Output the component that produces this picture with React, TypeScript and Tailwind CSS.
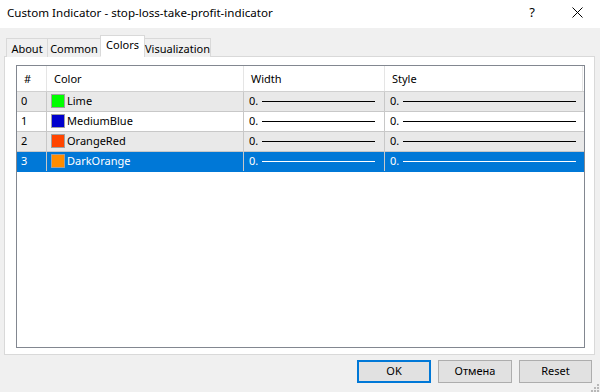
import clsx from 'clsx'

type Buffer = { index: number; name: string; color: string }

const buffers: Buffer[] = [
  { index: 0, name: 'Lime', color: '#00ff00' },
  { index: 1, name: 'MediumBlue', color: '#0000cd' },
  { index: 2, name: 'OrangeRed', color: '#ff4500' },
  { index: 3, name: 'DarkOrange', color: '#ff8c00' },
]

const tabs = [
  { label: 'About', width: 'w-[42px]' },
  { label: 'Common', width: 'w-[54px]' },
  { label: 'Colors', width: 'w-[45px]' },
  { label: 'Visualization', width: 'w-[67px]' },
]

function LineSample({ selected, className }: { selected: boolean; className: string }) {
  return <div className={clsx('h-px', selected ? 'bg-white' : 'bg-black', className)} />
}

export default function App() {
  const selectedRow = 3
  const activeTab = 'Colors'

  return (
    <div className="flex h-[392px] w-[600px] flex-col overflow-hidden bg-[#f0f0f0] font-['Segoe_UI','Noto_Sans',sans-serif] text-[11px] text-black">
      <div className="flex h-[28px] items-center bg-white pl-[7px]">
        <span className="flex-1 pb-[2px] text-[11.6px]">Custom Indicator - stop-loss-take-profit-indicator</span>
        <span className="w-[20px] pb-[2px] text-center text-[13px]">?</span>
        <svg className="ml-[30px] mr-[17px] mb-[2px]" width="11" height="11" viewBox="0 0 11 11">
          <path d="M0.5 0.5L10.5 10.5M10.5 0.5L0.5 10.5" stroke="#000" strokeWidth="1" />
        </svg>
      </div>

      <div className="relative z-10 mt-[7px] flex h-[22px] items-end pl-[6px] -mb-px">
        {tabs.map((tab) => {
          const active = tab.label === activeTab
          return (
            <div
              key={tab.label}
              className={clsx(
                '-ml-px flex items-start justify-center border border-[#d9d9d9] first:ml-0',
                tab.width,
                active
                  ? 'h-[22px] border-b-white bg-white pt-[1px]'
                  : 'h-[19px] border-b-0 bg-[#f0f0f0] pt-[2px]',
              )}
            >
              {tab.label}
            </div>
          )
        })}
      </div>

      <div className="ml-[4px] h-[303px] w-[591px] border border-[#d9d9d9] bg-white pl-[11px] pt-[8px]">
        <div className="h-[283px] w-[569px] border border-[#828790] bg-white">
          <div className="grid h-[26px] grid-cols-[30px_197px_141px_198px] border-b border-[#d0d0d0]">
            <div className="border-r border-[#e5e5e5] pl-[7px] pt-[5px]">#</div>
            <div className="border-r border-[#e5e5e5] pl-[7px] pt-[5px]">Color</div>
            <div className="border-r border-[#e5e5e5] pl-[7px] pt-[5px]">Width</div>
            <div className="border-r border-[#e5e5e5] pl-[7px] pt-[5px]">Style</div>
          </div>
          {buffers.map((b) => {
            const selected = b.index === selectedRow
            return (
              <div
                key={b.index}
                className={clsx(
                  'grid h-[20px] grid-cols-[30px_197px_141px_199px] border-b',
                  selected
                    ? 'border-[#0078d7] bg-[#0078d7] text-white'
                    : b.index % 2 === 0
                      ? 'border-[#c8c8c8] bg-[#e9e9e9]'
                      : 'border-[#c8c8c8] bg-white',
                )}
              >
                <div className="flex items-center border-r border-[#c8c8c8] pl-[4px]">{b.index}</div>
                <div className="flex items-center border-r border-[#c8c8c8] pl-[4px]">
                  <span
                    className="mr-[2px] h-[14px] w-[14px] border border-[#a0a0a0]"
                    style={{ backgroundColor: b.color }}
                  />
                  {b.name}
                </div>
                <div className="flex items-center border-r border-[#c8c8c8] pl-[5px]">
                  <span className="w-[13px]">0.</span>
                  <LineSample selected={selected} className="w-[113px]" />
                </div>
                <div className="flex items-center pl-[5px]">
                  <span className="w-[13px]">0.</span>
                  <LineSample selected={selected} className="w-[173px]" />
                </div>
              </div>
            )
          })}
        </div>
      </div>

      <div className="mt-[5px] flex items-start justify-end gap-[7px] pr-[8px]">
        <button className="h-[23px] w-[74px] border-2 border-[#0078d7] bg-[#e1e1e1]">OK</button>
        <button className="h-[23px] w-[74px] border border-[#adadad] bg-[#e1e1e1]">Отмена</button>
        <button className="h-[23px] w-[73px] border border-[#adadad] bg-[#e1e1e1]">Reset</button>
      </div>
      <div className="flex justify-end pr-[1px] pt-[1px]">
        <svg width="8" height="8" viewBox="0 0 8 8">
          <rect x="6" y="0" width="2" height="2" fill="#b8b8b8" />
          <rect x="3" y="3" width="2" height="2" fill="#b8b8b8" />
          <rect x="6" y="3" width="2" height="2" fill="#b8b8b8" />
          <rect x="0" y="6" width="2" height="2" fill="#b8b8b8" />
          <rect x="3" y="6" width="2" height="2" fill="#b8b8b8" />
          <rect x="6" y="6" width="2" height="2" fill="#b8b8b8" />
        </svg>
      </div>
    </div>
  )
}
